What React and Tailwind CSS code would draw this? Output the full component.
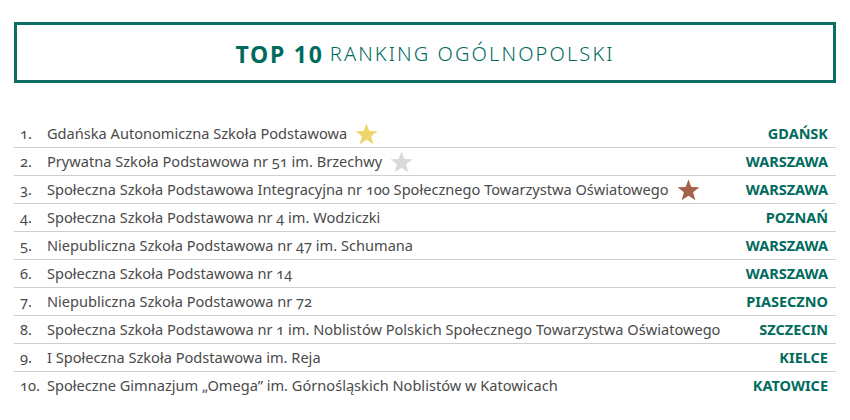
const schools = [
  { name: "Gdańska Autonomiczna Szkoła Podstawowa", city: "GDAŃSK", star: "#ecd66b" },
  { name: "Prywatna Szkoła Podstawowa nr 51 im. Brzechwy", city: "WARSZAWA", star: "#d9d9d9" },
  {
    name: "Społeczna Szkoła Podstawowa Integracyjna nr 100 Społecznego Towarzystwa Oświatowego",
    city: "WARSZAWA",
    star: "#a5624a",
  },
  { name: "Społeczna Szkoła Podstawowa nr 4 im. Wodziczki", city: "POZNAŃ" },
  { name: "Niepubliczna Szkoła Podstawowa nr 47 im. Schumana", city: "WARSZAWA" },
  { name: "Społeczna Szkoła Podstawowa nr 14", city: "WARSZAWA" },
  { name: "Niepubliczna Szkoła Podstawowa nr 72", city: "PIASECZNO" },
  {
    name: "Społeczna Szkoła Podstawowa nr 1 im. Noblistów Polskich Społecznego Towarzystwa Oświatowego",
    city: "SZCZECIN",
  },
  { name: "I Społeczna Szkoła Podstawowa im. Reja", city: "KIELCE" },
  { name: "Społeczne Gimnazjum „Omega” im. Górnośląskich Noblistów w Katowicach", city: "KATOWICE" },
];

const Star = ({ color }) => (
  <svg width="23" height="22" viewBox="0 0 24 23" className="ml-[8px] shrink-0">
    <polygon
      points="12,0.5 15,8.3 23.5,8.6 16.8,13.9 19.2,22.2 12,17.4 4.8,22.2 7.2,13.9 0.5,8.6 9,8.3"
      fill={color}
    />
  </svg>
);

export default function App() {
  return (
    <div className="w-[850px] h-[420px] bg-white px-[14px] pt-[22px] font-['Noto_Sans',sans-serif]">
      <div className="h-[61px] pt-[3px] border-[3px] border-[#0c6e62] flex items-center justify-center">
        <span className="text-[23px] font-bold text-[#006b5d] tracking-[1.8px] mr-[6px]">TOP 10</span>
        <span className="text-[20px] font-light text-[#006b5d] tracking-[2.1px]">RANKING OGÓLNOPOLSKI</span>
      </div>

      <div className="mt-[37px]">
        {schools.map((s, i) => (
          <div
            key={i}
            className={`h-[28px] flex items-center text-[14.6px] text-[#4a4a4a] [font-variant-numeric:oldstyle-nums] ${
              i < schools.length - 1 ? "border-b border-[#cfcfcf]" : ""
            }`}
          >
            <span className="w-[33px] pl-[6px] shrink-0">{i + 1}.</span>
            <span className="flex items-center">
              {s.name}
              {s.star && <Star color={s.star} />}
            </span>
            <span className="ml-auto pr-[8px] font-bold text-[#006b5d] text-[14.5px]">{s.city}</span>
          </div>
        ))}
      </div>
    </div>
  );
}
